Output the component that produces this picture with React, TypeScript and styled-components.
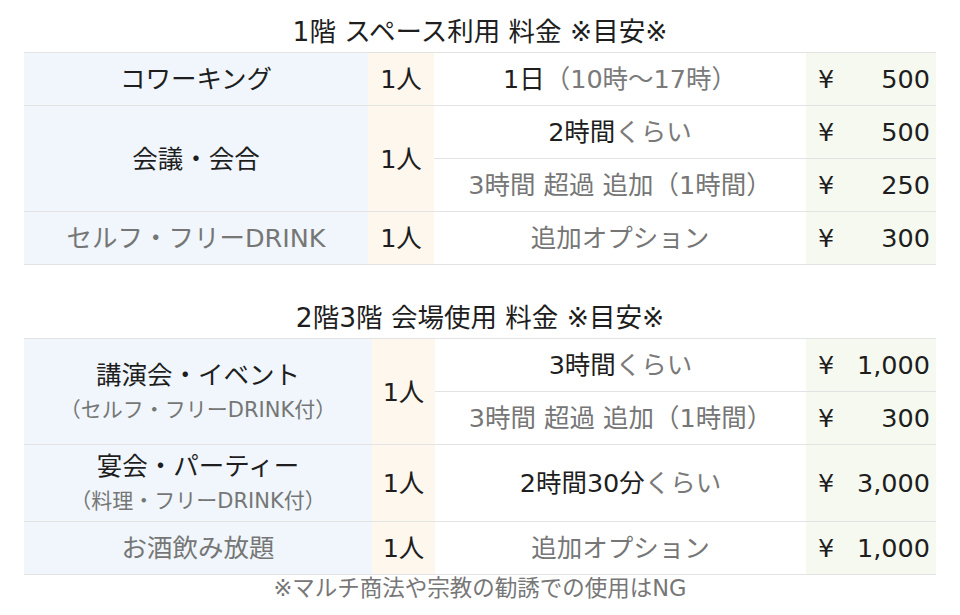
import type { ReactNode } from "react";
import styled, { createGlobalStyle } from "styled-components";

const GlobalStyle = createGlobalStyle`
  html, body {
    margin: 0;
    padding: 0;
    background: #fff;
  }
  body {
    font-family: "DejaVu Sans", "Noto Sans CJK JP", sans-serif;
    color: #1e1e1e;
  }
`;

const Gray = styled.span`
  color: #7a7a7a;
`;

type Price = { label: ReactNode; amount: string; muted?: boolean };

type Row = {
  name: string;
  sub?: string;
  mutedName?: boolean;
  people: string;
  prices: Price[];
  height: number;
};

const firstFloor: Row[] = [
  {
    name: "コワーキング",
    people: "1人",
    height: 53,
    prices: [{ label: <>1日<Gray>（10時〜17時）</Gray></>, amount: "500" }],
  },
  {
    name: "会議・会合",
    people: "1人",
    height: 53,
    prices: [
      { label: <>2時間<Gray>くらい</Gray></>, amount: "500" },
      { label: "3時間 超過 追加（1時間）", amount: "250", muted: true },
    ],
  },
  {
    name: "セルフ・フリーDRINK",
    mutedName: true,
    people: "1人",
    height: 53,
    prices: [{ label: "追加オプション", amount: "300", muted: true }],
  },
];

const upperFloors: Row[] = [
  {
    name: "講演会・イベント",
    sub: "（セルフ・フリーDRINK付）",
    people: "1人",
    height: 53,
    prices: [
      { label: <>3時間<Gray>くらい</Gray></>, amount: "1,000" },
      { label: "3時間 超過 追加（1時間）", amount: "300", muted: true },
    ],
  },
  {
    name: "宴会・パーティー",
    sub: "（料理・フリーDRINK付）",
    people: "1人",
    height: 77,
    prices: [{ label: <>2時間30分<Gray>くらい</Gray></>, amount: "3,000" }],
  },
  {
    name: "お酒飲み放題",
    mutedName: true,
    people: "1人",
    height: 53,
    prices: [{ label: "追加オプション", amount: "1,000", muted: true }],
  },
];

const Page = styled.div`
  width: 912px;
  padding: 12px 24px 0;
  display: flex;
  flex-direction: column;
`;

const Title = styled.h2<{ $gap?: boolean }>`
  margin: ${(p) => (p.$gap ? "33px 0 0" : "0")};
  height: 40px;
  line-height: 40px;
  font-size: 26.5px;
  font-weight: 400;
  text-align: center;
  color: #1e1e1e;
`;

const Table = styled.table`
  width: 912px;
  table-layout: fixed;
  border-collapse: collapse;
  font-size: 25.5px;

  td {
    padding: 0;
    border-top: 1px solid #e3e3e3;
    border-bottom: 1px solid #e3e3e3;
    text-align: center;
    vertical-align: middle;
    white-space: nowrap;
    line-height: 32px;
  }
`;

const NameCell = styled.td<{ $muted?: boolean }>`
  background: #f0f6fb;
  color: ${(p) => (p.$muted ? "#767676" : "#1e1e1e")};

  && {
    line-height: 36px;
  }
`;

const Sub = styled.div`
  font-size: 21px;
  line-height: 34px;
  color: #767676;
`;

const PeopleCell = styled.td`
  background: #fdf7ee;
  color: #1e1e1e;
`;

const PlanCell = styled.td<{ $muted?: boolean }>`
  background: #fff;
  color: ${(p) => (p.$muted ? "#767676" : "#1e1e1e")};
`;

const AmountCell = styled.td`
  background: #f6f9ef;
  color: #1e1e1e;
`;

const Amount = styled.div`
  display: flex;
  justify-content: space-between;
  padding: 0 6px 0 12px;
`;

const Note = styled.p`
  margin: 0;
  height: 26px;
  line-height: 26px;
  font-size: 22.5px;
  text-align: center;
  color: #777;
`;

const PriceTable = ({ rows, cols }: { rows: Row[]; cols: number[] }) => (
  <Table>
    <colgroup>
      {cols.map((w, i) => (
        <col key={i} style={{ width: w }} />
      ))}
    </colgroup>
    <tbody>
      {rows.map((row) =>
        row.prices.map((price, i) => (
          <tr key={row.name + i} style={{ height: row.height }}>
            {i === 0 && (
              <NameCell rowSpan={row.prices.length} $muted={row.mutedName}>
                {row.name}
                {row.sub && <Sub>{row.sub}</Sub>}
              </NameCell>
            )}
            {i === 0 && <PeopleCell rowSpan={row.prices.length}>{row.people}</PeopleCell>}
            <PlanCell $muted={price.muted}>{price.label}</PlanCell>
            <AmountCell>
              <Amount>
                <span>¥</span>
                <span>{price.amount}</span>
              </Amount>
            </AmountCell>
          </tr>
        ))
      )}
    </tbody>
  </Table>
);

const App = () => (
  <>
    <GlobalStyle />
    <Page>
      <Title>1階 スペース利用 料金 ※目安※</Title>
      <PriceTable rows={firstFloor} cols={[344, 66, 372, 130]} />
      <Title $gap>2階3階 会場使用 料金 ※目安※</Title>
      <PriceTable rows={upperFloors} cols={[348, 63, 371, 130]} />
      <Note>※マルチ商法や宗教の勧誘での使用はNG</Note>
    </Page>
  </>
);

export default App;
